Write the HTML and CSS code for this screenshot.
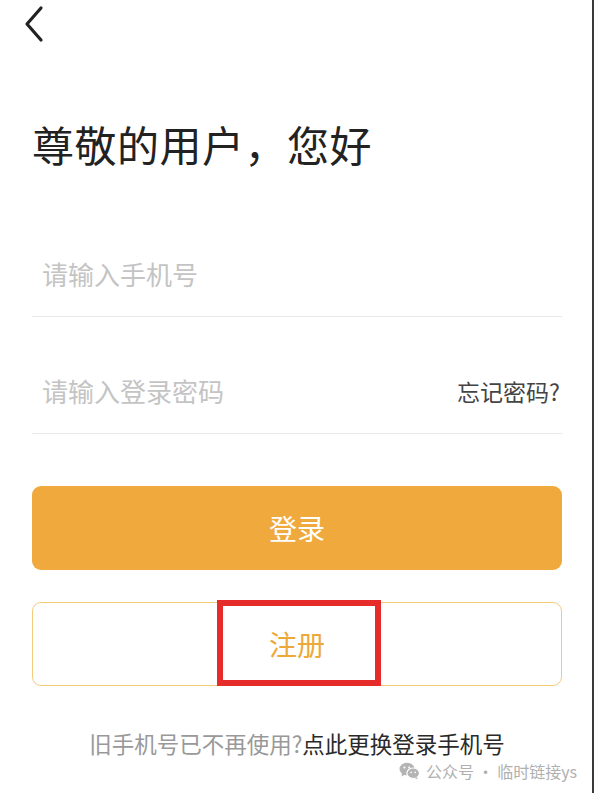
FILE: index.html
```html
<!DOCTYPE html>
<html lang="zh-CN">
<head>
<meta charset="utf-8">
<title>登录</title>
<link rel="stylesheet" href="styles.css">
</head>
<body>
<div class="page">
  <div class="topbar">
    <svg class="back" width="22" height="38" viewBox="0 0 22 38"><polyline points="18,3 4,19 18,35" fill="none" stroke="#222" stroke-width="3.2" stroke-linecap="round" stroke-linejoin="round"/></svg>
  </div>
  <h1 class="title">尊敬的用户，您好</h1>
  <div class="field">
    <span class="placeholder">请输入手机号</span>
  </div>
  <div class="field">
    <span class="placeholder">请输入登录密码</span>
    <span class="forgot">忘记密码?</span>
  </div>
  <div class="btn btn-primary">登录</div>
  <div class="btn btn-outline">注册<span class="highlight"></span></div>
  <p class="footer"><span class="muted">旧手机号已不再使用?</span><span class="strong">点此更换登录手机号</span></p>
  <div class="watermark">
    <svg class="wx" width="21" height="18" viewBox="0 0 21 18"><ellipse cx="8" cy="7" rx="7.5" ry="6.3" fill="#b4b4b4"/><path d="M3 11.5 L2.5 14.5 L6 12.5 Z" fill="#b4b4b4"/><ellipse cx="14.2" cy="11.3" rx="6.3" ry="5.3" fill="#b4b4b4" stroke="#fff" stroke-width="1.2"/><path d="M17.5 15 L19 17.3 L15.5 16 Z" fill="#b4b4b4"/><circle cx="5.4" cy="5.6" r="1" fill="#fff"/><circle cx="10.2" cy="5.6" r="1" fill="#fff"/><circle cx="12.2" cy="10.4" r="0.8" fill="#fff"/><circle cx="16.2" cy="10.4" r="0.8" fill="#fff"/></svg>
    <span>公众号 · 临时链接ys</span>
  </div>
</div>
</body>
</html>
```

FILE: styles.css
```css
html, body {
  margin: 0;
  padding: 0;
  background: #fff;
}
.page {
  width: 594px;
  height: 793px;
  box-sizing: border-box;
  padding: 0 30px 0 32px;
  display: flex;
  flex-direction: column;
  font-family: "Noto Sans CJK SC", "Noto Sans", sans-serif;
  position: relative;
  overflow: hidden;
  border-right: 2px solid #3a3a3a;
}
.topbar {
  height: 50px;
  display: flex;
  align-items: flex-start;
  padding-top: 5px;
  box-sizing: border-box;
}
.back {
  margin-left: -9px;
}
.title {
  margin: 69px 0 0 0;
  font-size: 42px;
  line-height: 50px;
  font-weight: 400;
  color: #222;
  letter-spacing: 0.5px;
}
.field {
  height: 117px;
  box-sizing: border-box;
  border-bottom: 1.5px solid #e9e9e9;
  display: flex;
  align-items: flex-end;
  justify-content: space-between;
  padding: 0 2px 25px 10px;
}
.title + .field {
  margin-top: 31px;
}
.placeholder {
  font-size: 26px;
  line-height: 34px;
  color: #c4c4c4;
}
.forgot {
  font-size: 23px;
  line-height: 34px;
  color: #444;
}
.btn {
  height: 84px;
  border-radius: 9px;
  display: flex;
  align-items: center;
  justify-content: center;
  font-size: 28px;
  box-sizing: border-box;
}
.btn-primary {
  margin-top: 52px;
  background: #f0a93c;
  color: #fff;
}
.btn-outline {
  margin-top: 32px;
  border: 1.5px solid #f2cc7c;
  color: #eca83a;
  position: relative;
}
.highlight {
  position: absolute;
  left: 184px;
  top: -3px;
  width: 164px;
  height: 86px;
  box-sizing: border-box;
  border: 6px solid #e62b2b;
}
.footer {
  margin: 42px 0 0 0;
  text-align: center;
  font-size: 22.5px;
  line-height: 30px;
}
.muted {
  color: #999;
}
.strong {
  color: #2a2a2a;
}
.watermark {
  display: flex;
  align-items: center;
  justify-content: flex-end;
  gap: 6px;
  margin-top: 1px;
  margin-right: -15px;
  font-size: 16px;
  line-height: 24px;
  color: #b0b0b0;
}
```
